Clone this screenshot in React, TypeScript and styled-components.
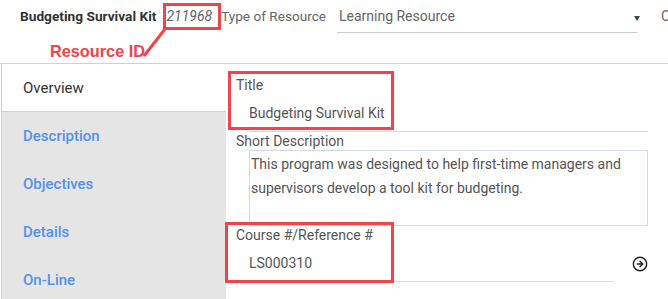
import { createGlobalStyle, styled } from "styled-components";
import { CircleArrowRight } from "lucide-react";

const GlobalStyle = createGlobalStyle`
  body {
    margin: 0;
    background: #fff;
    font-family: Roboto, "Liberation Sans", sans-serif;
  }
`;

const Page = styled.div`
  position: relative;
  width: 668px;
  height: 299px;
  overflow: hidden;
  background: #fff;
`;

const Header = styled.div`
  display: flex;
  align-items: flex-start;
  height: 64px;
  padding: 6px 0 0 20px;
  box-sizing: border-box;
  white-space: nowrap;
  border-bottom: 1px solid #d0d0d0;
  & > * {
    flex: none;
  }
`;

const ResourceName = styled.span`
  font-size: 13.7px;
  font-weight: 700;
  line-height: 20px;
  color: #333;
`;

const ResourceId = styled.span`
  margin-left: 10px;
  font-size: 14px;
  font-style: italic;
  line-height: 20px;
  color: #666;
`;

const FieldLabel = styled.span`
  margin-left: 9px;
  font-size: 13.6px;
  line-height: 20px;
  color: #666;
`;

const Select = styled.div`
  display: flex;
  justify-content: space-between;
  width: 300px;
  height: 27px;
  margin-left: 11px;
  padding: 0 0 0 2px;
  box-sizing: border-box;
  border-bottom: 1px solid #ccc;
  font-size: 14px;
  color: #666;
  & > span {
    line-height: 20px;
  }
`;

const Caret = styled.span`
  width: 0;
  height: 0;
  border-left: 3.5px solid transparent;
  border-right: 3.5px solid transparent;
  border-top: 5px solid #37474f;
  margin-top: 10px;
  margin-right: -3px;
`;

const Cut = styled.span`
  margin-left: 24px;
  font-size: 14px;
  line-height: 20px;
  color: #666;
`;

const Body = styled.div`
  display: flex;
  height: 235px;
`;

const Sidebar = styled.nav`
  flex: none;
  width: 225px;
  margin-left: 1px;
  border-left: 1px solid #d0d0d0;
  box-sizing: border-box;
  background: #e5e5e5;
  display: flex;
  flex-direction: column;
  overflow: hidden;
`;

const Tab = styled.div<{ $active?: boolean }>`
  flex: none;
  height: 48px;
  display: flex;
  align-items: center;
  padding-left: 21px;
  box-sizing: border-box;
  font-size: 15px;
  font-weight: ${(p) => (p.$active ? 400 : 500)};
  color: ${(p) => (p.$active ? "#333" : "#5590f0")};
  background: ${(p) => (p.$active ? "#fff" : "transparent")};
  border-bottom: ${(p) => (p.$active ? "1px solid #d0d0d0" : "none")};
`;

const Content = styled.div`
  flex: 1;
  min-width: 0;
  padding: 11px 20px 0 10px;
  display: flex;
  flex-direction: column;
`;

const Label = styled.div<{ $line?: number }>`
  font-size: 14px;
  line-height: ${(p) => p.$line ?? 20}px;
  color: #555;
`;

const ValueRow = styled.div`
  display: flex;
  align-items: center;
`;

const Value = styled.div<{ $width?: number }>`
  margin-left: 13px;
  ${(p) => (p.$width ? `width: ${p.$width}px;` : "flex: 1;")}
  padding: 8px 0 8px 0;
  font-size: 14px;
  line-height: 20px;
  color: #555;
  border-bottom: 1px solid #d4dbe0;
`;

const TextArea = styled.div`
  margin-left: 13px;
  height: 76px;
  padding: 1px 4px 0 1px;
  box-sizing: border-box;
  border: 1px solid #d4dbe0;
  font-size: 14px;
  line-height: 24px;
  color: #555;
`;

const GoIcon = styled(CircleArrowRight)`
  margin-left: 18px;
  color: #222;
  flex: none;
`;

const Callout = styled.div<{ $x: number; $y: number; $w: number; $h: number }>`
  position: absolute;
  left: ${(p) => p.$x}px;
  top: ${(p) => p.$y}px;
  width: ${(p) => p.$w}px;
  height: ${(p) => p.$h}px;
  border: 3px solid #f0434a;
  box-sizing: border-box;
  pointer-events: none;
`;

const CalloutText = styled.div`
  position: absolute;
  left: 50px;
  top: 41px;
  font-family: "Liberation Sans", Arial, sans-serif;
  font-size: 16.3px;
  font-weight: 700;
  color: #f0434a;
  line-height: 20px;
`;

const Pointer = styled.svg`
  position: absolute;
  left: 140px;
  top: 26px;
`;

export default function App() {
  return (
    <Page>
      <GlobalStyle />
      <Header>
        <ResourceName>Budgeting Survival Kit</ResourceName>
        <ResourceId>211968</ResourceId>
        <FieldLabel>Type of Resource</FieldLabel>
        <Select>
          <span>Learning Resource</span>
          <Caret />
        </Select>
        <Cut>Category</Cut>
      </Header>
      <Body>
        <Sidebar>
          <Tab $active>Overview</Tab>
          <Tab>Description</Tab>
          <Tab>Objectives</Tab>
          <Tab>Details</Tab>
          <Tab>On-Line</Tab>
        </Sidebar>
        <Content>
          <Label>Title</Label>
          <ValueRow>
            <Value>Budgeting Survival Kit</Value>
          </ValueRow>
          <Label $line={18}>Short Description</Label>
          <TextArea>
            This program was designed to help first-time managers and
            supervisors develop a tool kit for budgeting.
          </TextArea>
          <Label $line={19}>Course #/Reference #</Label>
          <ValueRow>
            <Value $width={369}>LS000310</Value>
            <GoIcon size={16} strokeWidth={2.2} />
          </ValueRow>
        </Content>
      </Body>

      <Callout $x={163} $y={3} $w={58} $h={27} />
      <Pointer width="30" height="34" viewBox="0 0 30 34">
        <line x1="4" y1="30" x2="25" y2="3" stroke="#f0434a" strokeWidth="3" />
      </Pointer>
      <CalloutText>Resource ID</CalloutText>
      <Callout $x={228} $y={71} $w={166} $h={59} />
      <Callout $x={225} $y={222} $w={169} $h={61} />
    </Page>
  );
}
